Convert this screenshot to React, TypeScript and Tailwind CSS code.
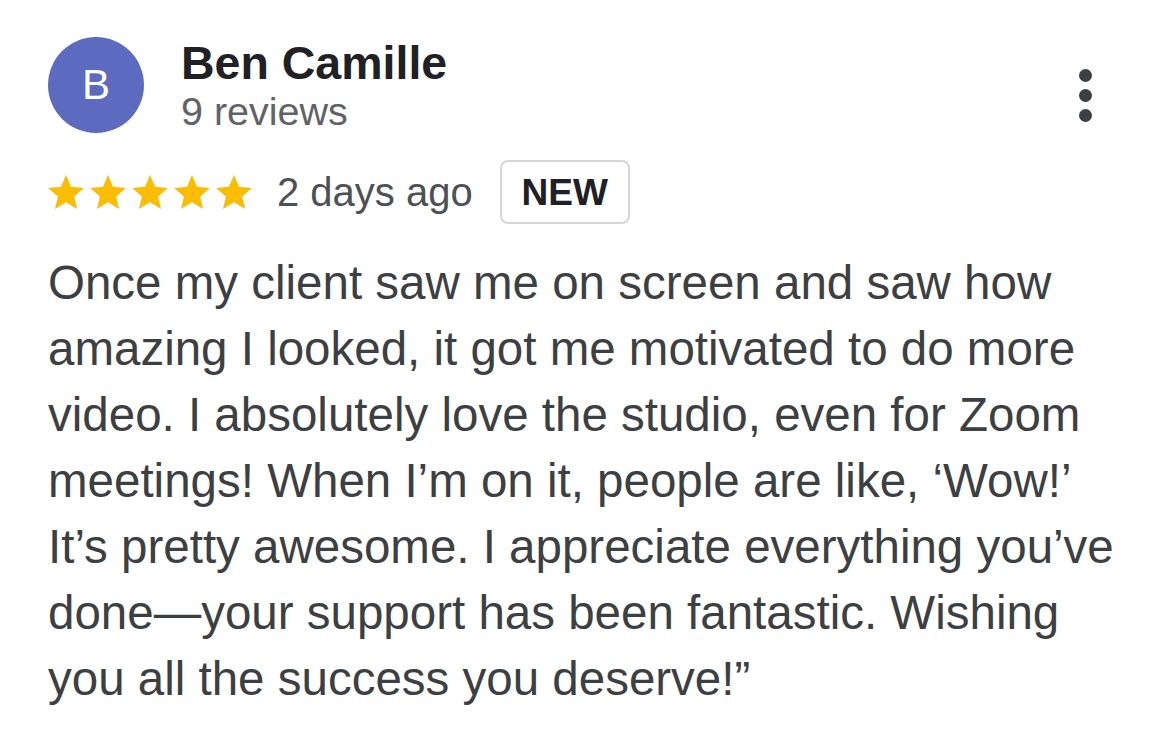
import React from "react";

const Star = () => (
  <svg viewBox="2 2 20 19" className="w-[36px] h-[34px]" fill="#fbbc04">
    <path d="M12 17.27L18.18 21l-1.64-7.03L22 9.24l-7.19-.61L12 2 9.19 8.63 2 9.24l5.46 4.73L5.82 21z" />
  </svg>
);

export default function App() {
  return (
    <div className="w-[1170px] h-[742px] bg-white overflow-hidden pl-[48px] pr-[30px] pt-[37px] font-['Liberation_Sans',Arial,sans-serif]">
      <div className="flex items-start">
        <div className="w-[96px] h-[96px] rounded-full bg-[#5c6bc0] flex items-center justify-center text-white text-[42px] leading-none">
          B
        </div>
        <div className="ml-[37px] flex flex-col">
          <div className="text-[46.5px] leading-[52px] font-bold text-[#202124]">Ben Camille</div>
          <div className="text-[39.5px] leading-[44px] text-[#5f6368]">9 reviews</div>
        </div>
        <div className="ml-auto mt-[32px] mr-[48px] flex flex-col gap-[7px]">
          <span className="w-[13px] h-[13px] rounded-full bg-[#3c4043]" />
          <span className="w-[13px] h-[13px] rounded-full bg-[#3c4043]" />
          <span className="w-[13px] h-[13px] rounded-full bg-[#3c4043]" />
        </div>
      </div>

      <div className="flex items-center mt-[27px]">
        <div className="flex gap-[6px]">
          <Star />
          <Star />
          <Star />
          <Star />
          <Star />
        </div>
        <span className="ml-[25px] text-[40px] leading-none text-[#4d5156]">2 days ago</span>
        <span className="ml-[27px] border-2 border-[#d6d6d6] rounded-[8px] w-[130px] h-[64px] flex items-center justify-center text-[37px] leading-none font-bold text-[#202124]">
          NEW
        </span>
      </div>

      <p className="mt-[26px] text-[47.5px] leading-[66px] text-[#3c4043]">
        Once my client saw me on screen and saw how
        <br />
        amazing I looked, it got me motivated to do more
        <br />
        video. I absolutely love the studio, even for Zoom
        <br />
        meetings! When I’m on it, people are like, ‘Wow!’
        <br />
        It’s pretty awesome. I appreciate everything you’ve
        <br />
        done—your support has been fantastic. Wishing
        <br />
        you all the success you deserve!”
      </p>
    </div>
  );
}
